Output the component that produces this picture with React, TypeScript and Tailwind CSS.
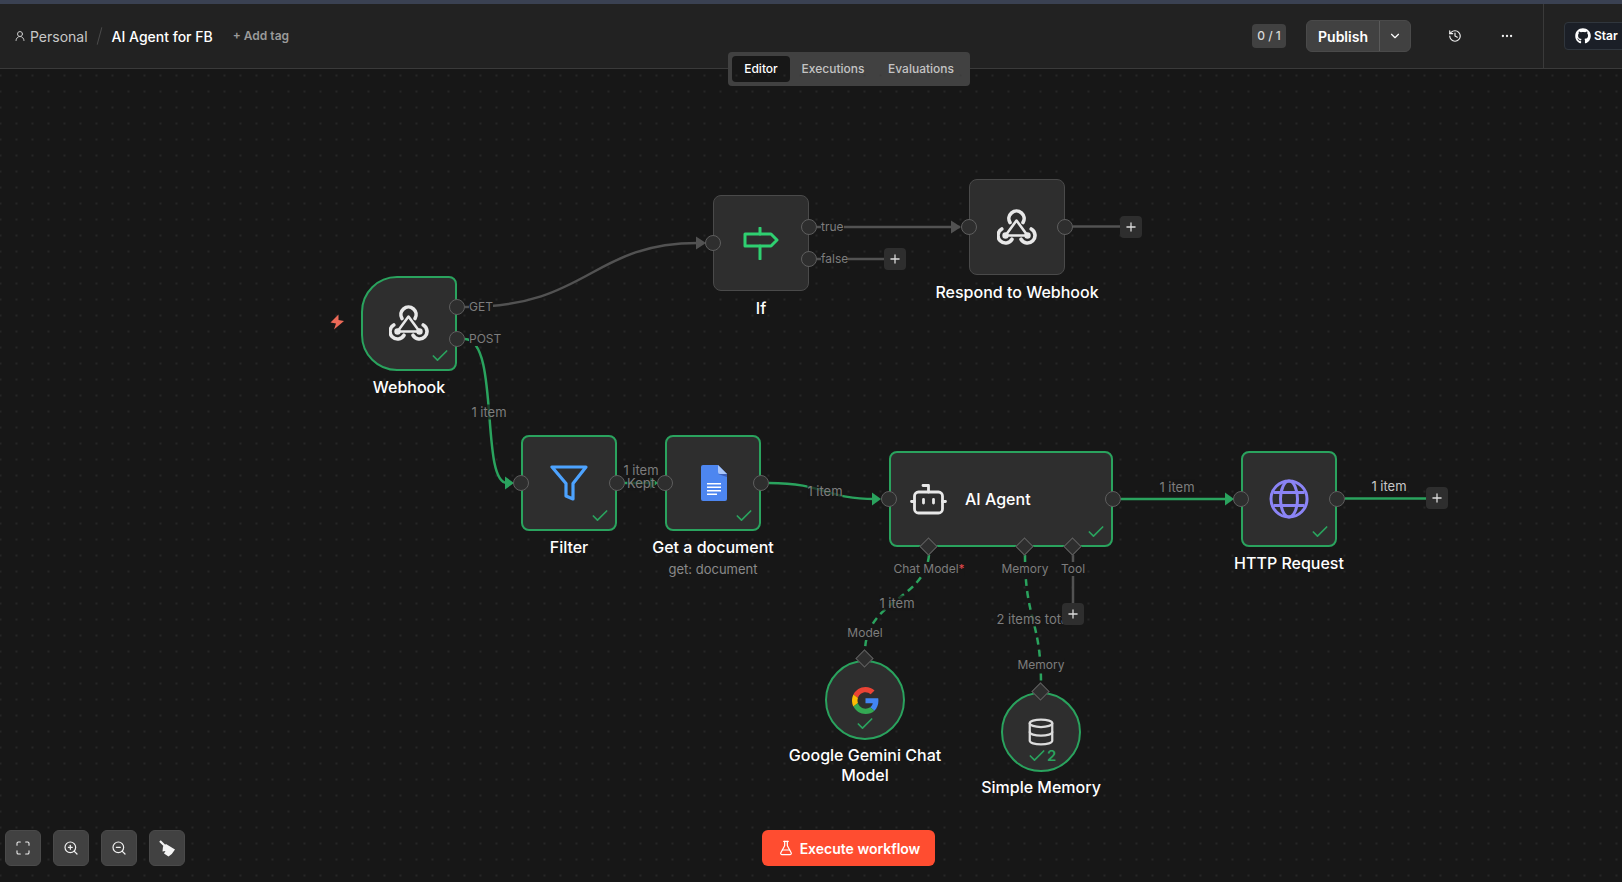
import React from "react";
import {
  Check,
  ChevronDown,
  Database,
  Ellipsis,
  FlaskConical,
  History,
  Maximize,
  Plus,
  UserRound,
  ZoomIn,
  ZoomOut,
} from "lucide-react";
import { FaGithub } from "react-icons/fa";

const WebhookIcon = () => (
  <svg width="40" height="37" viewBox="0 0 40 37" fill="none" stroke="#e8e8e8" strokeLinecap="round">
    <path d="M19.500 11.500 8.500 26.500H30.500z" strokeWidth="2.600" strokeLinejoin="round" />
    <path d="M13 13.500A7.600 7.600 0 1 1 26 13.500" strokeWidth="3.600" />
    <path d="M4.750 20A7.500 7.500 0 1 0 15 30.250" strokeWidth="3.600" />
    <path d="M34.250 20A7.500 7.500 0 1 1 24 30.250" strokeWidth="3.600" />
    <circle cx="8.500" cy="26.500" r="3.200" fill="#e8e8e8" stroke="none" />
    <circle cx="30.500" cy="26.500" r="3.200" fill="#e8e8e8" stroke="none" />
  </svg>
);

const IfIcon = () => (
  <svg width="36" height="33" viewBox="0 0 36 33" fill="none" stroke="#2fd071" strokeWidth="3" strokeLinejoin="round" strokeLinecap="round">
    <path d="M2 7h26l6 6-6 6H2z" />
    <path d="M17 1v6M17 19v13" />
  </svg>
);

const FilterIcon = () => (
  <svg width="38" height="36" viewBox="0 0 38 36" fill="none" stroke="#4da3ff" strokeWidth="3.200" strokeLinejoin="round">
    <path d="M2 2h34L23 18.500V34l-7-3V18.500z" />
  </svg>
);

const DocIcon = () => (
  <svg width="26" height="36" viewBox="0 0 26 36" className="ml-[1px]">
    <path d="M2 0h15l9 9v25a2 2 0 0 1-2 2H2a2 2 0 0 1-2-2V2a2 2 0 0 1 2-2z" fill="#4d86f0" />
    <path d="M17 0l9 9h-7a2 2 0 0 1-2-2z" fill="#a9c6fa" />
    <path d="M17 9h9v3z" fill="#3c5fb8" />
    <path d="M6 18h14v1.600H6zM6 21.500h14v1.600H6zM6 25h14v1.600H6zM6 28.500h10v1.600H6z" fill="#fff" />
  </svg>
);

const RobotIcon = () => (
  <svg width="37" height="31" viewBox="0 0 37 31" fill="none" stroke="#e8e8e8" strokeWidth="2.800" strokeLinecap="round" strokeLinejoin="round">
    <rect x="4.500" y="8" width="28" height="21" rx="4" />
    <path d="M18.500 8V1.500H13M1.500 17.500h3M32.500 17.500h3M13.500 15.500v3.500M23.500 15.500v3.500" />
  </svg>
);

const GlobeIcon = () => (
  <svg width="40" height="40" viewBox="0 0 40 40" fill="none" stroke="#8b84f5" strokeWidth="3">
    <circle cx="20" cy="20" r="18" />
    <ellipse cx="20" cy="20" rx="8.500" ry="18" />
    <path d="M4.500 13.500h31M4.500 26.500h31" />
  </svg>
);

const GoogleIcon = () => (
  <svg width="27" height="27" viewBox="0 0 48 48">
    <path fill="#EA4335" d="M24 9.5c3.54 0 6.71 1.22 9.21 3.6l6.85-6.85C35.9 2.38 30.47 0 24 0 14.62 0 6.51 5.38 2.56 13.22l7.98 6.19C12.43 13.72 17.74 9.5 24 9.5z" />
    <path fill="#4285F4" d="M46.98 24.55c0-1.57-.15-3.09-.38-4.55H24v9.02h12.94c-.58 2.96-2.26 5.48-4.78 7.18l7.73 6c4.51-4.18 7.09-10.36 7.09-17.65z" />
    <path fill="#FBBC05" d="M10.53 28.59c-.48-1.45-.76-2.99-.76-4.59s.27-3.14.76-4.59l-7.98-6.19C.92 16.46 0 20.12 0 24c0 3.88.92 7.54 2.56 10.78l7.97-6.19z" />
    <path fill="#34A853" d="M24 48c6.48 0 11.93-2.13 15.89-5.81l-7.73-6c-2.15 1.45-4.92 2.3-8.16 2.3-6.26 0-11.57-4.22-13.47-9.91l-7.98 6.19C6.51 42.62 14.62 48 24 48z" />
  </svg>
);

const Bolt = () => (
  <svg width="15" height="16" viewBox="0 0 15 16" fill="#ec6a58">
    <path d="M8.500 0.500 0.500 8.500 6 9.500 4 15.500 14 7 8.500 6z" />
  </svg>
);

const Broom = () => (
  <svg width="17" height="17" viewBox="0 0 17 17" fill="#f4f4f4">
    <path d="M1 1 6.500 6.500" stroke="#f4f4f4" strokeWidth="2.200" fill="none" />
    <path d="M4 6.500 7 4l9 5.500q-2.500 4.500-6.500 7L5 13.500l1.500-2.500-3 .5z" />
  </svg>
);

const Node = ({
  className,
  children,
  done,
}: {
  className: string;
  children: React.ReactNode;
  done?: boolean;
}) => (
  <div
    className={`absolute flex items-center justify-center bg-[#2e2e2e] ${
      done ? "border-2 border-[#2aa35e]" : "border border-[#4a4a4a]"
    } ${className}`}
  >
    {children}
    {done && (
      <Check size={20} strokeWidth={2} className="absolute bottom-[3px] right-[5px] text-[#2aa35e]" />
    )}
  </div>
);

const Port = ({ className }: { className: string }) => (
  <div className={`absolute h-4 w-4 rounded-full border border-[#5e5e5e] bg-[#2e2e2e] ${className}`} />
);

const Diamond = ({ className }: { className: string }) => (
  <div className={`absolute h-[13px] w-[13px] rotate-45 border border-[#5e5e5e] bg-[#2e2e2e] ${className}`} />
);

const AddButton = ({ className }: { className: string }) => (
  <div className={`absolute flex h-[22px] w-[22px] items-center justify-center rounded-[4px] bg-[#2e2e2e] text-[#dcdcdc] ${className}`}>
    <Plus size={14} strokeWidth={2.2} />
  </div>
);

const NodeName = ({ className, children }: { className: string; children: React.ReactNode }) => (
  <div className={`absolute -translate-x-1/2 -translate-y-1/2 whitespace-nowrap text-center text-[16px] font-medium leading-[20px] text-white ${className}`}>
    {children}
  </div>
);

// edge run labels, 13px
const EdgeLabel = ({ className, children }: { className: string; children: React.ReactNode }) => (
  <div className={`absolute -translate-x-1/2 -translate-y-1/2 whitespace-nowrap bg-[#171717]/70 text-[13px] leading-[15px] ${className}`}>
    {children}
  </div>
);

// handle names under the nodes, 12px
const HandleLabel = ({ className, children }: { className: string; children: React.ReactNode }) => (
  <div className={`absolute -translate-x-1/2 -translate-y-1/2 whitespace-nowrap bg-[#171717] text-[12px] leading-[14px] text-[#7d7d7d] ${className}`}>
    {children}
  </div>
);

const OutLabel = ({ className, children }: { className: string; children: React.ReactNode }) => (
  <div className={`absolute -translate-y-1/2 whitespace-nowrap bg-[#171717] text-[12px] leading-[14px] text-[#7d7d7d] ${className}`}>
    {children}
  </div>
);

const Edges = () => (
  <svg className="absolute left-0 top-0" width="1622" height="813" viewBox="0 69 1622 813" fill="none">
    <g stroke="#525252" strokeWidth="2.500">
      <path d="M465 307C590 307 590 243 698 243" />
      <path d="M817 227H960M817 259H884M1073 226.500H1120" />
      <path d="M1073 555V603" />
    </g>
    <path d="M696 236.500 706 243 696 249.500z" fill="#525252" />
    <path d="M951 220.500 961 227 951 233.500z" fill="#525252" />
    <g stroke="#2aa35e" strokeWidth="2.500">
      <path d="M465 339C500 339 480 483 507 483" />
      <path d="M625 483H650" />
      <path d="M769 483C825 483 825 499 875 499" />
      <path d="M1121 499H1226" />
      <path d="M1345 498.500H1426" />
      <path d="M929 555C925 600 865 600 865 652M1025 555C1025 620 1041 620 1041 684" strokeDasharray="7 5" />
    </g>
    <path d="M505 476.500 514 483 505 489.500z" fill="#2aa35e" />
    <path d="M650 477 658 483 650 489z" fill="#2aa35e" />
    <path d="M872 492.500 881 499 872 505.500z" fill="#2aa35e" />
    <path d="M1225 492.500 1234 499 1225 505.500z" fill="#2aa35e" />
  </svg>
);

const ToolButton = ({ children }: { children: React.ReactNode }) => (
  <button className="flex h-[36px] w-[36px] items-center justify-center rounded-[6px] border border-[#4a4a4a] bg-[#414141] text-[#f0f0f0]">
    {children}
  </button>
);

const Header = () => (
  <div className="relative h-[69px] shrink-0 border-b border-[#3a3a3a] bg-[#222222]">
    <div className="h-1 bg-[#3a4152]" />
    <div className="flex h-[64px] items-center justify-between pl-[14px]">
      <div className="flex items-center">
        <UserRound size={12} className="text-[#c8c8c8]" />
        <span className="ml-[4px] text-[14px] text-[#c8c8c8]">Personal</span>
        <span className="ml-[11px] h-[18px] w-px rotate-[15deg] bg-[#4a4a4a]" />
        <span className="ml-[12px] text-[14px] font-medium text-white">AI Agent for FB</span>
        <span className="ml-[20px] text-[12px] font-semibold text-[#9a9a9a]">+ Add tag</span>
      </div>
      <div className="flex h-full items-center">
        <div className="flex h-[24px] w-[34px] items-center justify-center rounded-[4px] bg-[#414141] text-[12px] font-medium text-[#d8d8d8]">
          0 / 1
        </div>
        <div className="ml-[20px] flex h-[32px] w-[105px] rounded-[6px] border border-[#4a4a4a] bg-[#414141] text-white">
          <div className="flex w-[72px] items-center justify-center text-[14px] font-semibold">Publish</div>
          <div className="flex flex-1 items-center justify-center border-l border-[#5a5a5a]">
            <ChevronDown size={14} />
          </div>
        </div>
        <History size={14} className="ml-[37px] text-[#f0f0f0]" />
        <Ellipsis size={14} className="ml-[38px] text-[#f0f0f0]" />
        <div className="ml-[29px] flex h-full w-[79px] items-center border-l border-[#3a3a3a] pl-[20px]">
          <div className="flex h-[28px] w-[70px] shrink-0 items-center gap-[3px] rounded-[4px] border border-[#30363d] bg-[#1b1f27] pl-[10px] text-[12px] font-semibold text-white">
            <FaGithub size={16} />
            <span>Star</span>
          </div>
        </div>
      </div>
    </div>
    <div className="absolute left-[728px] top-[52px] flex h-[34px] w-[242px] items-center rounded-[4px] bg-[#414141] px-[4px] text-[12px] font-medium text-[#c4c4c4]">
      <div className="flex h-[26px] w-[58px] items-center justify-center rounded-[4px] bg-[#171717] text-white">Editor</div>
      <div className="flex w-[86px] justify-center">Executions</div>
      <div className="flex w-[90px] justify-center">Evaluations</div>
    </div>
  </div>
);

export default function App() {
  return (
    <div className="flex h-[882px] w-full flex-col overflow-hidden bg-[#171717] font-['Inter',sans-serif]">
      <Header />
      <div className="relative flex-1 bg-[radial-gradient(circle,#363636_0.5px,transparent_0.9px)] bg-[position:8.5px_-1.5px] bg-[size:16px_16px]">
        <Edges />

        <div className="absolute left-[330px] top-[245px]">
          <Bolt />
        </div>

        <Node done className="left-[361px] top-[207px] h-[95px] w-[96px] rounded-l-[36px] rounded-r-[8px]">
          <WebhookIcon />
        </Node>
        <Node className="left-[713px] top-[126px] h-[96px] w-[96px] rounded-[8px]">
          <IfIcon />
        </Node>
        <Node className="left-[969px] top-[110px] h-[96px] w-[96px] rounded-[8px]">
          <WebhookIcon />
        </Node>
        <Node done className="left-[521px] top-[366px] h-[96px] w-[96px] rounded-[8px]">
          <FilterIcon />
        </Node>
        <Node done className="left-[665px] top-[366px] h-[96px] w-[96px] rounded-[8px]">
          <DocIcon />
        </Node>
        <Node done className="left-[889px] top-[382px] h-[96px] w-[224px] justify-start rounded-[8px] pl-[19px]">
          <RobotIcon />
          <span className="ml-[18px] text-[16px] font-medium text-white">AI Agent</span>
        </Node>
        <Node done className="left-[1241px] top-[382px] h-[96px] w-[96px] rounded-[8px]">
          <GlobeIcon />
        </Node>

        <div className="absolute left-[825px] top-[591px] flex h-[80px] w-[80px] items-center justify-center rounded-full border-2 border-[#2aa35e] bg-[#2e2e2e]">
          <GoogleIcon />
          <Check size={20} strokeWidth={2} className="absolute bottom-[4px] left-[28px] text-[#2aa35e]" />
        </div>
        <div className="absolute left-[1001px] top-[623px] flex h-[80px] w-[80px] items-center justify-center rounded-full border-2 border-[#2aa35e] bg-[#2e2e2e]">
          <Database size={30} strokeWidth={1.8} className="mb-[1px] text-[#dcdcdc]" />
          <div className="absolute bottom-[3px] left-[24px] flex items-center text-[15px] font-semibold text-[#2aa35e]">
            <Check size={20} strokeWidth={2} />
            <span>2</span>
          </div>
        </div>

        <Port className="left-[449px] top-[230px]" />
        <Port className="left-[449px] top-[262px]" />
        <Port className="left-[705px] top-[166px]" />
        <Port className="left-[801px] top-[150px]" />
        <Port className="left-[801px] top-[182px]" />
        <Port className="left-[961px] top-[150px]" />
        <Port className="left-[1057px] top-[150px]" />
        <Port className="left-[513px] top-[406px]" />
        <Port className="left-[609px] top-[406px]" />
        <Port className="left-[657px] top-[406px]" />
        <Port className="left-[753px] top-[406px]" />
        <Port className="left-[881px] top-[422px]" />
        <Port className="left-[1105px] top-[422px]" />
        <Port className="left-[1233px] top-[422px]" />
        <Port className="left-[1329px] top-[422px]" />

        <Diamond className="left-[922px] top-[471px]" />
        <Diamond className="left-[1018px] top-[471px]" />
        <Diamond className="left-[1066px] top-[471px]" />
        <Diamond className="left-[858px] top-[583px]" />
        <Diamond className="left-[1034px] top-[616px]" />

        <NodeName className="left-[409px] top-[318px]">Webhook</NodeName>
        <NodeName className="left-[761px] top-[239px]">If</NodeName>
        <NodeName className="left-[1017px] top-[223px]">Respond to Webhook</NodeName>
        <NodeName className="left-[569px] top-[478px]">Filter</NodeName>
        <NodeName className="left-[713px] top-[478px]">Get a document</NodeName>
        <div className="absolute left-[713px] top-[501px] -translate-x-1/2 -translate-y-1/2 whitespace-nowrap text-[13px] text-[#8a8a8a]">
          get: document
        </div>
        <NodeName className="left-[1289px] top-[494px]">HTTP Request</NodeName>
        <NodeName className="left-[865px] top-[696px]">
          Google Gemini Chat
          <br />
          Model
        </NodeName>
        <NodeName className="left-[1041px] top-[718px]">Simple Memory</NodeName>

        <OutLabel className="left-[469px] top-[238px]">GET</OutLabel>
        <OutLabel className="left-[469px] top-[270px]">POST</OutLabel>
        <OutLabel className="left-[821px] top-[158px]">true</OutLabel>
        <OutLabel className="left-[821px] top-[190px]">false</OutLabel>

        <EdgeLabel className="left-[489px] top-[343px] text-[#7d7d7d]">1 item</EdgeLabel>
        <EdgeLabel className="left-[641px] top-[414px] text-[#7d7d7d]">Kept</EdgeLabel>
        <EdgeLabel className="left-[641px] top-[401px] text-[#7d7d7d]">1 item</EdgeLabel>
        <EdgeLabel className="left-[825px] top-[422px] text-[#7d7d7d]">1 item</EdgeLabel>
        <EdgeLabel className="left-[1177px] top-[418px] text-[#7d7d7d]">1 item</EdgeLabel>
        <EdgeLabel className="left-[1389px] top-[417px] text-[#c8c8c8]">1 item</EdgeLabel>
        <HandleLabel className="left-[929px] top-[500px]">
          Chat Model<span className="text-[#e5484d]">*</span>
        </HandleLabel>
        <HandleLabel className="left-[1025px] top-[500px]">Memory</HandleLabel>
        <HandleLabel className="left-[1073px] top-[500px]">Tool</HandleLabel>
        <EdgeLabel className="left-[897px] top-[534px] text-[#7d7d7d]">1 item</EdgeLabel>
        <EdgeLabel className="left-[1034px] top-[550px] text-[#7d7d7d]">2 items total</EdgeLabel>
        <HandleLabel className="left-[865px] top-[564px]">Model</HandleLabel>
        <HandleLabel className="left-[1041px] top-[596px]">Memory</HandleLabel>

        <AddButton className="left-[1120px] top-[147px]" />
        <AddButton className="left-[884px] top-[179px]" />
        <AddButton className="left-[1426px] top-[418px]" />
        <AddButton className="left-[1062px] top-[534px]" />

        <div className="absolute bottom-[16px] left-[5px] flex gap-[12px]">
          <ToolButton>
            <Maximize size={16} strokeWidth={1.6} />
          </ToolButton>
          <ToolButton>
            <ZoomIn size={16} strokeWidth={1.8} />
          </ToolButton>
          <ToolButton>
            <ZoomOut size={16} strokeWidth={1.8} />
          </ToolButton>
          <ToolButton>
            <Broom />
          </ToolButton>
        </div>

        <button className="absolute bottom-[16px] left-[762px] flex h-[36px] w-[173px] items-center justify-center gap-[6px] rounded-[6px] bg-[#ff4d30] pl-[1px] text-[14px] font-semibold text-white">
          <FlaskConical size={16} strokeWidth={1.8} />
          Execute workflow
        </button>
      </div>
    </div>
  );
}
